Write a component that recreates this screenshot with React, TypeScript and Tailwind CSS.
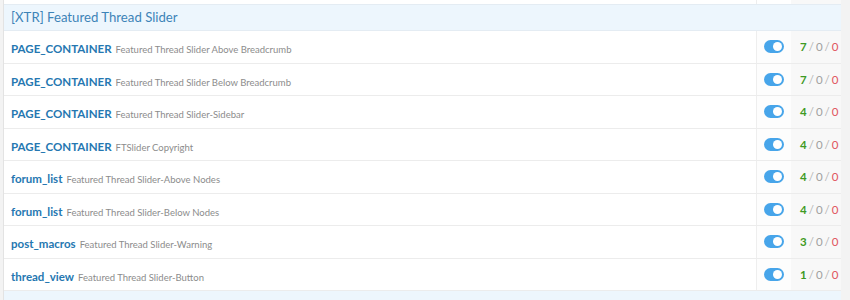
const rows = [
  { name: "PAGE_CONTAINER", desc: "Featured Thread Slider Above Breadcrumb", count: 7 },
  { name: "PAGE_CONTAINER", desc: "Featured Thread Slider Below Breadcrumb", count: 7 },
  { name: "PAGE_CONTAINER", desc: "Featured Thread Slider-Sidebar", count: 4 },
  { name: "PAGE_CONTAINER", desc: "FTSlider Copyright", count: 4 },
  { name: "forum_list", desc: "Featured Thread Slider-Above Nodes", count: 4 },
  { name: "forum_list", desc: "Featured Thread Slider-Below Nodes", count: 4 },
  { name: "post_macros", desc: "Featured Thread Slider-Warning", count: 3 },
  { name: "thread_view", desc: "Featured Thread Slider-Button", count: 1 },
];

function Toggle() {
  return (
    <div className="relative h-[13px] w-[20px] rounded-full bg-[#47a5ea]">
      <div className="absolute right-[2px] top-[2px] h-[9px] w-[9px] rounded-full bg-white" />
    </div>
  );
}

export default function App() {
  return (
    <div className="h-[300px] w-[850px] overflow-hidden bg-[#f3f3f3] font-['Lato',sans-serif]">
      <div className="ml-[3px] w-[838px] border-l border-[#e3e3e3]">
        <div className="flex h-[4px] bg-white">
          <div className="flex-1" />
          <div className="w-[35px] border-l border-[#eeeeee]" />
          <div className="w-[50px] bg-[#f8f8f8]" />
        </div>
        <div className="flex h-[27px] items-center border-y border-[#e4ecf3] bg-[#edf6fd] px-[7px] text-[13.2px] text-[#3d84b8]">
          [XTR] Featured Thread Slider
        </div>
        {rows.map((r, i) => (
          <div key={i} className="flex h-[32.5px] border-b border-[#ececec] bg-white">
            <div className="flex flex-1 items-baseline gap-[4px] px-[7px] pt-[9px]">
              <span className="text-[11.5px] font-bold text-[#2577b1]">{r.name}</span>
              <span className="text-[9.5px] text-[#8c8c8c]">{r.desc}</span>
            </div>
            <div className="flex w-[35px] items-center justify-center border-l border-[#eeeeee] bg-[#fdfdfd]">
              <Toggle />
            </div>
            <div className="flex w-[50px] items-center pl-[9px] bg-[#f8f8f8] text-[11.5px]">
              <span className="font-bold text-[#3f9a24]">{r.count}</span>
              <span className="mx-[2px] text-[#b5b5b5]">/</span>
              <span className="text-[#a0a0a0]">0</span>
              <span className="mx-[2px] text-[#b5b5b5]">/</span>
              <span className="text-[#e0555d]">0</span>
            </div>
          </div>
        ))}
        <div className="h-[20px] bg-[#edf6fd]" />
      </div>
    </div>
  );
}
